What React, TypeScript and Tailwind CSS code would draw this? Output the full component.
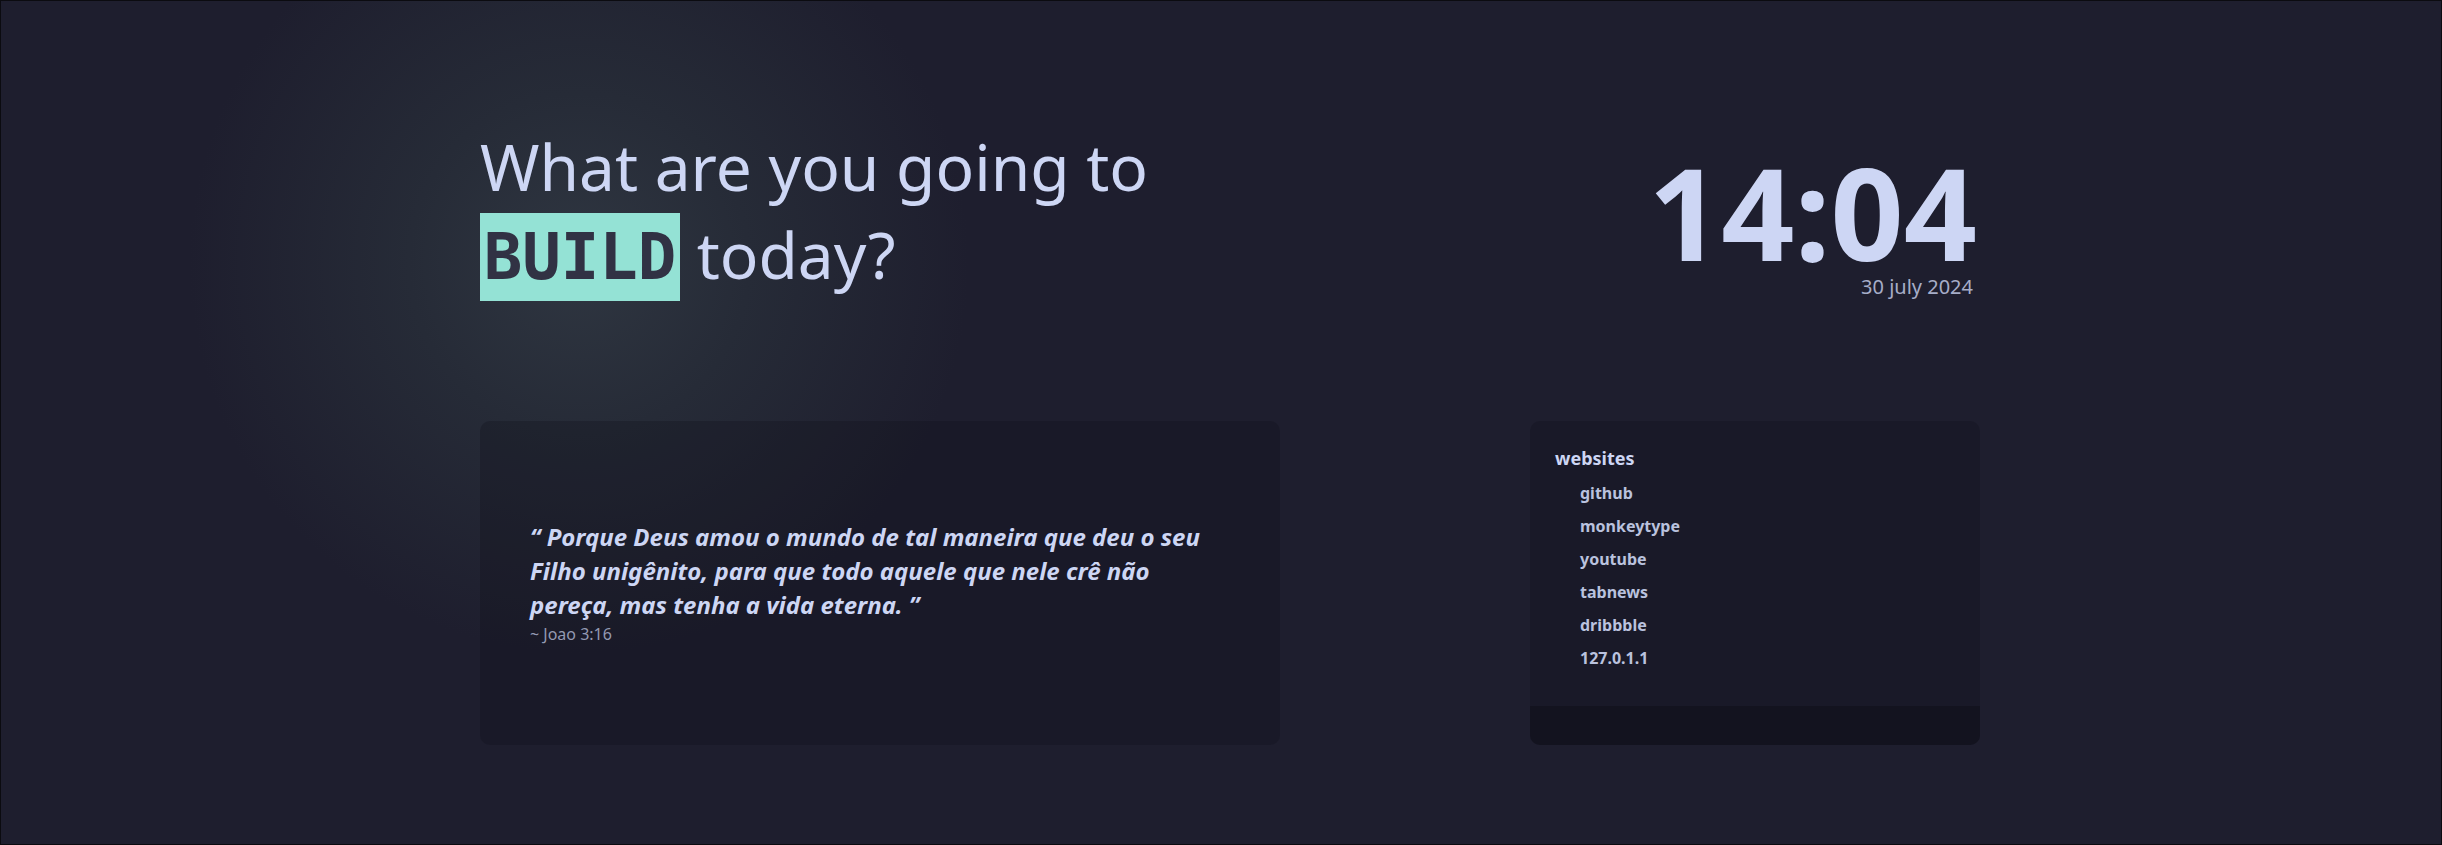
const links = ['github', 'monkeytype', 'youtube', 'tabnews', 'dribbble', '127.0.1.1'];

export default function App() {
   return (
      <div className="h-[845px] w-full overflow-hidden border border-[#0b0b10] bg-[#1e1e2e] bg-[radial-gradient(circle_at_578px_262px,#2f3641_0px,#262b37_170px,#1e1e2e_390px)] pl-[479px] pr-[461px] pt-[122px] font-['Noto_Sans',sans-serif] text-[#cdd6f4]">
         <header className="flex items-end justify-between">
            <h1 className="text-[64px] font-normal leading-[88px]">
               What are you going to
               <br />
               <span className="inline-block h-[88px] w-[200px] bg-[#94e2d5] text-center font-['DejaVu_Sans_Mono',monospace] font-bold text-[#313244]">BUILD</span> today?
            </h1>
            <div className="mr-[3px] flex flex-col items-end">
               <p className="text-9xl font-bold leading-[122px]">14:04</p>
               <p className="mr-[4px] text-xl text-[#a6adc8]">30 july 2024</p>
            </div>
         </header>

         <main className="mt-[120px] flex justify-between">
            <section className="flex h-[324px] w-[800px] flex-col justify-center rounded-[10px] bg-[#11111b]/30 px-[50px]">
               <p className="text-2xl font-bold italic leading-[34px]">
                  “ Porque Deus amou o mundo de tal maneira que deu o seu Filho unigênito, para que todo aquele que nele crê não pereça, mas tenha a vida eterna. ”
               </p>
               <p className="text-base text-[#9399b2]">~ Joao 3:16</p>
            </section>

            <section className="flex h-[324px] w-[450px] flex-col overflow-hidden rounded-[10px] bg-[#11111b]/30">
               <div className="flex-1 px-[25px] pt-[23px]">
                  <h2 className="text-lg font-bold">websites</h2>
                  <ul className="mt-[5px] pl-[25px]">
                     {links.map((l) => (
                        <li key={l} className="h-[33px] text-base font-bold leading-[33px] text-[#bac2de]">
                           <a href="#">{l}</a>
                        </li>
                     ))}
                  </ul>
               </div>
               <div className="h-[39px] bg-[#11111b]/70" />
            </section>
         </main>
      </div>
   );
}
